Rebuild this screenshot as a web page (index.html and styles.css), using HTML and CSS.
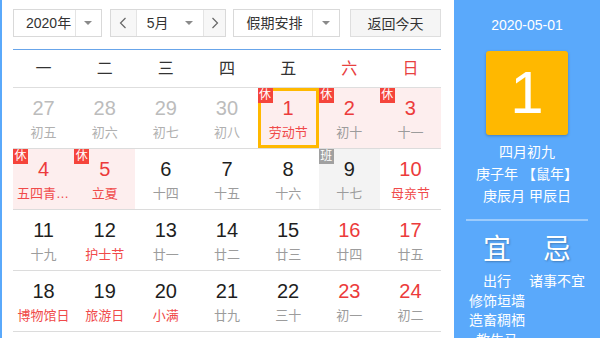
FILE: index.html
```html
<!DOCTYPE html>
<html lang="zh-CN">
<head>
<meta charset="utf-8">
<title>日历</title>
<link rel="stylesheet" href="styles.css">
</head>
<body>
<div class="widget">
  <div class="main">
    <div class="toolbar">
      <div class="select year">
        <span class="sel-text">2020年</span>
        <span class="sel-arrow"><i class="tri"></i></span>
      </div>
      <div class="month-group">
        <span class="nav prev"><svg width="8" height="12" viewBox="0 0 8 12"><polyline points="6.5,1 1.5,6 6.5,11" fill="none" stroke="#666" stroke-width="1.2"/></svg></span>
        <span class="month"><span>5月</span><i class="tri"></i></span>
        <span class="nav next"><svg width="8" height="12" viewBox="0 0 8 12"><polyline points="1.5,1 6.5,6 1.5,11" fill="none" stroke="#666" stroke-width="1.2"/></svg></span>
      </div>
      <div class="select holiday">
        <span class="sel-text">假期安排</span>
        <span class="sel-arrow"><i class="tri"></i></span>
      </div>
      <button class="today-btn">返回今天</button>
    </div>

    <div class="cal">
      <div class="week-head">
        <span>一</span><span>二</span><span>三</span><span>四</span><span>五</span><span class="we">六</span><span class="we">日</span>
      </div>
      <div class="week">
        <div class="day prev"><div class="num">27</div><div class="lunar">初五</div></div>
        <div class="day prev"><div class="num">28</div><div class="lunar">初六</div></div>
        <div class="day prev"><div class="num">29</div><div class="lunar">初七</div></div>
        <div class="day prev"><div class="num">30</div><div class="lunar">初八</div></div>
        <div class="day hol red sel"><span class="badge">休</span><div class="num">1</div><div class="lunar fest">劳动节</div></div>
        <div class="day hol red"><span class="badge">休</span><div class="num">2</div><div class="lunar">初十</div></div>
        <div class="day hol red"><span class="badge">休</span><div class="num">3</div><div class="lunar">十一</div></div>
      </div>
      <div class="week">
        <div class="day hol red"><span class="badge">休</span><div class="num">4</div><div class="lunar fest">五四青年节</div></div>
        <div class="day hol red"><span class="badge">休</span><div class="num">5</div><div class="lunar fest">立夏</div></div>
        <div class="day"><div class="num">6</div><div class="lunar">十四</div></div>
        <div class="day"><div class="num">7</div><div class="lunar">十五</div></div>
        <div class="day"><div class="num">8</div><div class="lunar">十六</div></div>
        <div class="day work"><span class="badge ban">班</span><div class="num">9</div><div class="lunar">十七</div></div>
        <div class="day red"><div class="num">10</div><div class="lunar fest">母亲节</div></div>
      </div>
      <div class="week">
        <div class="day"><div class="num">11</div><div class="lunar">十九</div></div>
        <div class="day"><div class="num">12</div><div class="lunar fest">护士节</div></div>
        <div class="day"><div class="num">13</div><div class="lunar">廿一</div></div>
        <div class="day"><div class="num">14</div><div class="lunar">廿二</div></div>
        <div class="day"><div class="num">15</div><div class="lunar">廿三</div></div>
        <div class="day red"><div class="num">16</div><div class="lunar">廿四</div></div>
        <div class="day red"><div class="num">17</div><div class="lunar">廿五</div></div>
      </div>
      <div class="week">
        <div class="day"><div class="num">18</div><div class="lunar fest">博物馆日</div></div>
        <div class="day"><div class="num">19</div><div class="lunar fest">旅游日</div></div>
        <div class="day"><div class="num">20</div><div class="lunar fest">小满</div></div>
        <div class="day"><div class="num">21</div><div class="lunar">廿九</div></div>
        <div class="day"><div class="num">22</div><div class="lunar">三十</div></div>
        <div class="day red"><div class="num">23</div><div class="lunar">初一</div></div>
        <div class="day red"><div class="num">24</div><div class="lunar">初二</div></div>
      </div>
    </div>
  </div>

  <aside class="side">
    <div class="side-date">2020-05-01</div>
    <div class="big">1</div>
    <div class="info">
      <div>四月初九</div>
      <div>庚子年 【鼠年】</div>
      <div>庚辰月 甲辰日</div>
    </div>
    <div class="sep"></div>
    <div class="yiji">
      <div class="yj-col">
        <div class="yj-title">宜</div>
        <div class="yj-items">
          <div>出行</div>
          <div>修饰垣墙</div>
          <div>造畜稠栖</div>
          <div>教牛马</div>
        </div>
      </div>
      <div class="yj-col">
        <div class="yj-title">忌</div>
        <div class="yj-items">
          <div>诸事不宜</div>
        </div>
      </div>
    </div>
  </aside>
</div>
</body>
</html>
```

FILE: styles.css
```css
html, body {
  margin: 0;
  padding: 0;
  background: #fff;
}
body {
  font-family: "Liberation Sans", "Noto Sans CJK SC", sans-serif;
}
.widget {
  display: flex;
  width: 600px;
  height: 338px;
  overflow: hidden;
  background: #fff;
}
.main {
  box-sizing: border-box;
  width: 454px;
  border-left: 2px solid #5aa9fb;
  padding: 9px 13px 0 11px;
}

/* toolbar */
.toolbar {
  display: flex;
  height: 28px;
  font-size: 14px;
  color: #333;
}
.select {
  display: flex;
  box-sizing: border-box;
  height: 28px;
  border: 1px solid #d9d9d9;
  background: #fff;
}
.select.year { width: 89px; }
.select.year .sel-text { width: 49px; }
.select.holiday { width: 107px; margin-left: 7px; }
.select.holiday .sel-text { width: 66px; }
.sel-text {
  padding-left: 12px;
  line-height: 26px;
  white-space: nowrap;
}
.sel-arrow {
  flex: 1;
  display: flex;
  align-items: center;
  justify-content: center;
  border-left: 1px solid #e4e4e4;
}
.tri {
  display: block;
  width: 0;
  height: 0;
  border-left: 4px solid transparent;
  border-right: 4px solid transparent;
  border-top: 4px solid #8a8a8a;
}
.month-group {
  display: flex;
  box-sizing: border-box;
  width: 117px;
  height: 28px;
  margin-left: 8px;
  border: 1px solid #d9d9d9;
}
.nav {
  display: flex;
  align-items: center;
  justify-content: center;
  background: #f7f7f7;
}
.nav.prev {
  width: 25px;
  border-right: 1px solid #e4e4e4;
}
.nav.next {
  flex: 1;
  border-left: 1px solid #e4e4e4;
}
.month {
  display: flex;
  align-items: center;
  justify-content: space-between;
  box-sizing: border-box;
  width: 66px;
  padding: 0 10px 0 10px;
  line-height: 26px;
  background: #fff;
}
.today-btn {
  box-sizing: border-box;
  width: 91px;
  height: 28px;
  margin-left: 10px;
  padding: 0;
  border: 1px solid #dedede;
  background: #f5f5f5;
  font-family: inherit;
  font-size: 14px;
  color: #333;
}

/* calendar */
.cal {
  margin-top: 12px;
  border-top: 1px solid #68a5ea;
}
.week-head {
  display: grid;
  grid-template-columns: repeat(7, 1fr);
  height: 37px;
  line-height: 37px;
  text-align: center;
  font-size: 16px;
  color: #333;
  border-bottom: 1px solid #dedede;
}
.week-head .we { color: #e8413f; }
.week {
  display: grid;
  grid-template-columns: repeat(7, 1fr);
  border-bottom: 1px solid #dcdcdc;
}
.day {
  position: relative;
  box-sizing: border-box;
  height: 60px;
  padding: 8px 4px 0;
  text-align: center;
  min-width: 0;
}
.num {
  font-size: 20px;
  line-height: 24px;
  color: #1e1e1e;
}
.lunar {
  margin-top: 4px;
  font-size: 13px;
  line-height: 18px;
  color: #9c9c9c;
  white-space: nowrap;
  overflow: hidden;
  text-overflow: ellipsis;
}
.hol { background: #fdeeee; }
.work { background: #f3f3f3; }
.sel { box-shadow: inset 0 0 0 3px #ffb800; }
.red .num { color: #ec3b3b; }
.lunar.fest { color: #f04a4a; }
.prev .num { color: #bcbcbc; }
.prev .lunar { color: #b0b0b0; }
.badge {
  position: absolute;
  top: 0;
  left: 0;
  width: 15px;
  height: 15px;
  line-height: 15px;
  font-size: 12px;
  text-align: center;
  color: #fff;
  background: #f5443b;
}
.badge.ban { background: #a0a0a0; }

/* side panel */
.side {
  flex: 1;
  background: #5aa9fb;
  color: #fff;
  text-align: center;
}
.side-date {
  padding-top: 15px;
  font-size: 14px;
  line-height: 20px;
}
.big {
  width: 82px;
  height: 84px;
  margin: 16px auto 0;
  border-radius: 3px;
  background: #ffb800;
  box-shadow: 0 1px 3px rgba(0, 0, 0, 0.25);
  font-size: 60px;
  line-height: 84px;
}
.info {
  margin-top: 6px;
  font-size: 14px;
  line-height: 22px;
}
.sep {
  height: 2px;
  margin: 12px 12px 0;
  background: rgba(255, 255, 255, 0.4);
}
.yiji {
  display: flex;
  width: 120px;
  margin: 0 auto;
}
.yj-col { width: 60px; }
.yj-title {
  margin-top: 11px;
  font-size: 28px;
  line-height: 36px;
  text-shadow: 1px 1px 2px rgba(0, 0, 0, 0.25);
}
.yj-items {
  margin-top: 4px;
  font-size: 14px;
  line-height: 19.5px;
  white-space: nowrap;
}
```
